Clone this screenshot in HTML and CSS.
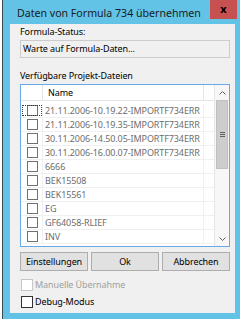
FILE: index.html
```html
<!DOCTYPE html>
<html lang="de">
<head>
    <meta charset="UTF-8">
    <title>Daten von Formula 734 übernehmen</title>
    <link rel="stylesheet" href="styles.css">
</head>
<body>
    <div class="window">
        <div class="titlebar">
            <span class="title">Daten von Formula 734 übernehmen</span>
            <span class="close">x</span>
        </div>
        <div class="client">
            <div class="label">Formula-Status:</div>
            <div class="status">Warte auf Formula-Daten...</div>
            <div class="label list-label">Verfügbare Projekt-Dateien</div>

            <div class="listview">
                <div class="list-main">
                    <div class="list-head">
                        <span class="col-check"></span>
                        <span class="col-name">Name</span>
                        <span class="col-rest"></span>
                    </div>
                    <ul class="rows">
                        <li class="focused"><span class="col-check"><i class="box"></i></span><span class="col-name">21.11.2006-10.19.22-IMPORTF734ERR</span><span class="col-rest"></span></li>
                        <li><span class="col-check"><i class="box"></i></span><span class="col-name">21.11.2006-10.19.35-IMPORTF734ERR</span><span class="col-rest"></span></li>
                        <li><span class="col-check"><i class="box"></i></span><span class="col-name">30.11.2006-14.50.05-IMPORTF734ERR</span><span class="col-rest"></span></li>
                        <li><span class="col-check"><i class="box"></i></span><span class="col-name">30.11.2006-16.00.07-IMPORTF734ERR</span><span class="col-rest"></span></li>
                        <li><span class="col-check"><i class="box"></i></span><span class="col-name">6666</span><span class="col-rest"></span></li>
                        <li><span class="col-check"><i class="box"></i></span><span class="col-name">BEK15508</span><span class="col-rest"></span></li>
                        <li><span class="col-check"><i class="box"></i></span><span class="col-name">BEK15561</span><span class="col-rest"></span></li>
                        <li><span class="col-check"><i class="box"></i></span><span class="col-name">EG</span><span class="col-rest"></span></li>
                        <li><span class="col-check"><i class="box"></i></span><span class="col-name">GF64058-RLIEF</span><span class="col-rest"></span></li>
                        <li><span class="col-check"><i class="box"></i></span><span class="col-name">INV</span><span class="col-rest"></span></li>
                    </ul>
                </div>
                <div class="scrollbar">
                    <span class="arrow">
                        <svg width="7" height="4" viewBox="0 0 7 4"><path d="M0.5 3.5 L3.5 0.5 L6.5 3.5" fill="none" stroke="#606060" stroke-width="1"/></svg>
                    </span>
                    <div class="track">
                        <div class="thumb">
                            <svg width="5" height="5" viewBox="0 0 5 5"><path d="M0 0.5 H5 M0 2.5 H5 M0 4.5 H5" stroke="#606060" stroke-width="1"/></svg>
                        </div>
                    </div>
                    <span class="arrow">
                        <svg width="7" height="4" viewBox="0 0 7 4"><path d="M0.5 0.5 L3.5 3.5 L6.5 0.5" fill="none" stroke="#606060" stroke-width="1"/></svg>
                    </span>
                </div>
            </div>

            <div class="buttons">
                <button>Einstellungen</button>
                <button>Ok</button>
                <button>Abbrechen</button>
            </div>

            <label class="check disabled"><i class="box"></i>Manuelle Übernahme</label>
            <label class="check"><i class="box"></i>Debug-Modus</label>
        </div>
    </div>
</body>
</html>
```

FILE: styles.css
```css
body {
    margin: 0;
    background: #ffffff;
    font-family: 'Noto Sans', 'Open Sans', sans-serif;
    width: 241px;
    height: 323px;
    overflow: hidden;
}

.window {
    margin-left: 2px;
    border-left: 1px solid #3c4a52;
    background: #62c3e7;
    width: 238px;
    height: 319px;
    padding: 0 5px 6px 7px;
    box-sizing: border-box;
    display: flex;
    flex-direction: column;
}

.titlebar {
    height: 24px;
    display: flex;
    align-items: flex-start;
    justify-content: space-between;
}

.title {
    font-size: 10.6px;
    line-height: 14px;
    margin-top: 6px;
    margin-left: 7px;
    white-space: nowrap;
    color: #1b1b1b;
}

.close {
    width: 27px;
    height: 19px;
    margin-right: -2px;
    background: #c75050;
    color: #000000;
    font-weight: bold;
    font-size: 11px;
    line-height: 17px;
    text-align: center;
}

.client {
    flex: 1;
    background: #f0f0f0;
    padding: 2px 5px 0 10px;
    font-size: 9px;
    letter-spacing: -0.1px;
    color: #000000;
}

.label {
    line-height: 12px;
}

.status {
    margin-top: 2px;
    height: 18px;
    box-sizing: border-box;
    border: 1px solid #cccccc;
    background: #f0f0f0;
    padding-left: 2px;
    line-height: 16px;
}

.list-label {
    margin-top: 12px;
}

.listview {
    margin-top: 2px;
    height: 163px;
    box-sizing: border-box;
    border: 1px solid #6aa9e9;
    background: #ffffff;
    display: flex;
}

.list-main {
    flex: 1;
    overflow: hidden;
}

.list-head {
    display: flex;
    height: 16px;
    box-sizing: border-box;
    border-bottom: 1px solid #e5e5e5;
    line-height: 15px;
    color: #000000;
}

.list-head .col-check,
.list-head .col-name {
    border-right: 1px solid #e5e5e5;
}

.col-check {
    width: 21px;
    flex: none;
    display: flex;
    align-items: center;
    justify-content: center;
}

.col-name {
    width: 158px;
    flex: none;
    padding-left: 2px;
    white-space: nowrap;
    overflow: hidden;
}

.list-head .col-name {
    padding-left: 5px;
    width: 155px;
}

.col-rest {
    flex: 1;
}

.rows {
    list-style: none;
    margin: 3px 0 0;
    padding: 0;
}

.rows li {
    display: flex;
    height: 14px;
    box-sizing: border-box;
    border-bottom: 1px solid #f0f0f0;
    line-height: 13px;
    color: #6d6d6d;
}

.rows .col-check,
.rows .col-name {
    border-right: 1px solid #f0f0f0;
}

.box {
    display: inline-block;
    width: 11px;
    height: 11px;
    box-sizing: border-box;
    border: 1px solid #707070;
    background: #ffffff;
}

.rows .col-check .box {
    margin-left: 2px;
}

.focused .col-check {
    outline: 1px dotted #404040;
    outline-offset: -2px;
}

.scrollbar {
    width: 14px;
    flex: none;
    border-left: 1px solid #e6e6e6;
    background: #f7f7f7;
    display: flex;
    flex-direction: column;
}

.arrow {
    height: 15px;
    display: flex;
    align-items: center;
    justify-content: center;
}

.track {
    flex: 1;
}

.thumb {
    height: 69px;
    margin: 0 1px;
    background: #cdcdcd;
    border: 1px solid #c0c0c0;
    box-sizing: border-box;
    display: flex;
    align-items: center;
    justify-content: center;
}

.buttons {
    margin-top: 5px;
    display: flex;
    gap: 3px;
}

.buttons button {
    flex: 1;
    height: 19px;
    padding: 0;
    border: 1px solid #adadad;
    background: #e1e1e1;
    font-family: inherit;
    font-size: 9px;
    letter-spacing: -0.1px;
    color: #000000;
}

.check {
    display: flex;
    align-items: center;
    gap: 2px;
    height: 12px;
    line-height: 12px;
    margin-top: 8px;
    margin-left: 1px;
}

.check .box {
    width: 12px;
    height: 12px;
    border-color: #333333;
}

.check + .check {
    margin-top: 5px;
}

.disabled {
    color: #a0a0a0;
}

.disabled .box {
    border-color: #c6c6c6;
}
```
